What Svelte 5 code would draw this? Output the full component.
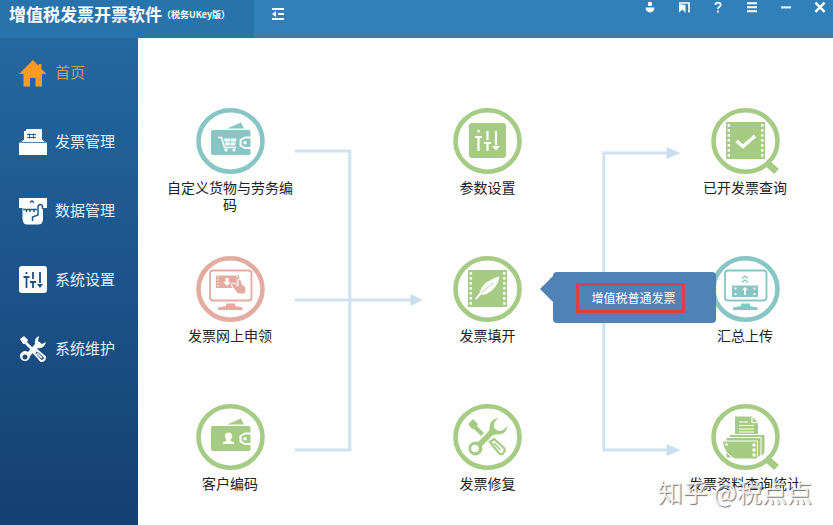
<script>
    const menu = [
        { icon: 'home', label: '首页' },
        { icon: 'tray', label: '发票管理' },
        { icon: 'card', label: '数据管理' },
        { icon: 'sliders', label: '系统设置' },
        { icon: 'tools', label: '系统维护' }
    ];

    const nodes = [
        { icon: 'goods', label: '自定义货物与劳务编码', tone: 'teal', col: 1 },
        { icon: 'sliders', label: '参数设置', tone: 'green', col: 3 },
        { icon: 'check', label: '已开发票查询', tone: 'green', col: 5, lens: true },
        { icon: 'apply', label: '发票网上申领', tone: 'pink', col: 1 },
        { icon: 'feather', label: '发票填开', tone: 'green', col: 3, tip: '增值税普通发票' },
        { icon: 'upload', label: '汇总上传', tone: 'teal', col: 5 },
        { icon: 'customer', label: '客户编码', tone: 'green', col: 1 },
        { icon: 'tools', label: '发票修复', tone: 'green', col: 3 },
        { icon: 'report', label: '发票资料查询统计', tone: 'green', col: 5, lens: true }
    ];

    const actions = [
        { icon: 'user', label: '用户' },
        { icon: 'skin', label: '窗口' },
        { icon: 'help', label: '帮助' },
        { icon: 'menu', label: '菜单' },
        { icon: 'min', label: '最小化' },
        { icon: 'close', label: '关闭' }
    ];

    let current = $state('首页');
</script>

<div class="app">
    <header>
        <div class="brand">
            <h1>增值税发票开票软件</h1>
            <span>（税务UKey版）</span>
        </div>
        <button class="toggle" aria-label="收起菜单">
            <svg viewBox="0 0 14 14" width="14" height="14">
                <path d="M1 2H13M7 7H13M1 12H13" stroke="currentColor" stroke-width="2" />
                <path d="M1 7L5 4V10Z" fill="currentColor" />
            </svg>
        </button>
        <div class="actions">
            {#each actions as action}
                <button aria-label={action.label}>
                    <svg viewBox="0 0 14 14" width="14" height="14" fill="none" stroke="currentColor" stroke-width="2">
                        {#if action.icon === 'user'}
                            <circle cx="7" cy="4" r="2.2" fill="currentColor" stroke="none" />
                            <path d="M2.500 7.500H11.500Q11 12 7 12.500Q3 12 2.500 7.500Z" fill="currentColor" stroke="none" />
                        {:else if action.icon === 'skin'}
                            <path d="M2 3H12V12.500" stroke-width="1.600" />
                            <path d="M2 4L8.500 5V13L5.500 9.500L2 12.500Z" fill="currentColor" stroke="none" />
                        {:else if action.icon === 'help'}
                            <path d="M4.400 5Q4.400 2.600 7 2.600Q9.700 2.600 9.700 4.800Q9.700 6 8.200 6.900Q7 7.600 7 9M7 10.600V12.600" stroke-width="1.800" />
                        {:else if action.icon === 'menu'}
                            <path d="M2 3.200H12M2 7.200H12M2 11.200H12" />
                        {:else if action.icon === 'min'}
                            <path d="M2 7.400H12" />
                        {:else}
                            <path d="M2.400 2.600L11.600 11.800M11.600 2.600L2.400 11.800" stroke-width="2.400" />
                        {/if}
                    </svg>
                </button>
            {/each}
        </div>
    </header>

    <div class="body">
        <nav>
            {#each menu as item}
                <a href="#{item.icon}" class:active={current === item.label} onclick={() => (current = item.label)}>
                    <svg viewBox="0 0 28 28" width="28" height="28" fill="currentColor">
                        {#if item.icon === 'home'}
                            <path d="M14 1L0 15H4.500V27.500H11V19H16.500V27.500H23V15H27.500L22.500 10V5H19.500V7Z" fill="#fb9a24" />
                        {:else if item.icon === 'tray'}
                            <path d="M5 3H7V1H23V11L28 15V27H0V15L5 11Z" />
                            <path d="M5 11L1.500 14.500H26.500L23 11" fill="none" stroke="#235f96" stroke-width="0.800" />
                            <path d="M8 6.500H17M8 9.500H17M10.500 5.500V10.500M14.500 5.500V10.500" fill="none" stroke="#235f96" stroke-width="1" />
                        {:else if item.icon === 'card'}
                            <path d="M0 1H28V11H24V22Q24 27.500 19 27.500H8Q4 27.500 3.500 22V11H0Z" />
                            <path d="M11 5.500L13 4L15 5.500M4 12.500H18M7.500 12V15M11 12V15M15 12V15M13.500 24V20L19 18V10Q19 7.500 21.500 7.500Q23.500 7.500 23.500 10.500V12" fill="none" stroke="#1e588d" stroke-width="1.500" />
                        {:else if item.icon === 'sliders'}
                            <rect width="28" height="27" rx="3" />
                            <path d="M7.500 6V8M4.500 11H10.500M7.500 11V22M14 6V13M11 16H17M14 16V22M21 6V17" fill="none" stroke="#1b4f84" stroke-width="1.800" />
                            <path d="M18 18H24L21 22Z" fill="#1b4f84" />
                        {:else}
                            <path d="M1 4L5 1L9 5L8 7L15 14L13 16L6 9L4 9Z" />
                            <path d="M20 1Q15 3 16 9L9 17A5 5 0 1 0 11 21L19 13Q25 14 27 7L23 9L19 6Z" />
                            <circle cx="6" cy="22" r="2.500" fill="#174a7e" />
                            <path d="M15 18L18 15L26 22Q26 26 22 26Z" fill="none" stroke="currentColor" stroke-width="2" />
                            <path d="M18 18L23 23" stroke="currentColor" stroke-width="1.500" />
                        {/if}
                    </svg>
                    <span>{item.label}</span>
                </a>
            {/each}
        </nav>

        <main>
            <svg class="link first" viewBox="0 0 128 346" preserveAspectRatio="none">
                <path d="M0 43H55V342H0M0 192H118" />
                <polygon points="116,186 128,192 116,198" />
            </svg>
            <svg class="link second" viewBox="0 0 128 346" preserveAspectRatio="none">
                <path d="M116 45H51V342H116" />
                <polygon points="114,39 128,45 114,51" />
                <polygon points="114,336 128,342 114,348" />
            </svg>

            {#each nodes as node}
                <div class="node {node.tone}" style:grid-column={node.col}>
                    <button>
                        <svg viewBox="0 0 69 66" width="69" height="66" fill="currentColor">
                            <ellipse class="ring" cx="34.5" cy="33" rx="32" ry="30.8" />
                            {#if node.lens}
                                <path class="handle" d="M55 54L65.500 63.500" />
                            {/if}

                            {#if node.icon === 'goods' || node.icon === 'customer'}
                                <path d="M31 20.500L45 14.500L48 20.500Z" />
                                <path d="M17 22H53Q54.500 22 54.500 24V45Q54.500 47 53 47H17Q15 47 15 45V24Q15 22 17 22Z" />
                                <path class="cut" d="M55 29.500H49L44.500 32V37.500L49 40H55" stroke-width="2" />
                                <circle cx="49" cy="34.800" r="1.800" fill="#fff" />
                                {#if node.icon === 'goods'}
                                    <path class="cut" d="M22 29.500H25.500L28.500 39.500H40" stroke-width="1.600" />
                                    <path d="M28 30.500H40.500L39 37.500H29.500Z" fill="#fff" />
                                    <path d="M34.300 30V38M28 34H40" stroke="currentColor" stroke-width="0.800" />
                                    <circle cx="30" cy="42" r="1.600" fill="#fff" />
                                    <circle cx="38" cy="42" r="1.600" fill="#fff" />
                                {:else}
                                    <path d="M32.500 28.500Q36 28.500 36 32Q36 34.500 34.500 36Q34.500 37.500 38 38V40H27V38Q30.500 37.500 30.500 36Q29 34.500 29 32Q29 28.500 32.500 28.500Z" fill="#fff" />
                                {/if}
                            {:else if node.icon === 'sliders'}
                                <rect x="16" y="15" width="37" height="35" rx="3" />
                                <path class="cut" d="M25.500 22V24.500M22 29H29M25.500 29V43M34.500 23V32M31 35H38M34.500 35V43M43 23V37" stroke-width="2.200" />
                                <path d="M39 38H47L43 42.500Z" fill="#fff" />
                            {:else if node.icon === 'check' || node.icon === 'feather'}
                                <rect x="15" y="14" width="39" height="37" />
                                {#each [16, 21, 26, 31, 36, 41, 46] as y}
                                    <rect x="16.500" y={y} width="2.600" height="2.800" rx="1" fill="#fff" />
                                    <rect x="50" y={y} width="2.600" height="2.800" rx="1" fill="#fff" />
                                {/each}
                                {#if node.icon === 'check'}
                                    <path class="cut" d="M25.500 33L32 38.500L44 28" stroke-width="3.400" />
                                {:else}
                                    <path d="M22 43L27 36Q29 28 36 25Q42 21 46.500 20.500Q45 30 38 35Q33 39.500 28 38.500L23.500 43.500Z" fill="#fff" />
                                    <path d="M28 37L40 27" stroke="currentColor" stroke-width="0.800" />
                                {/if}
                            {:else if node.icon === 'apply' || node.icon === 'upload'}
                                <rect x="14" y="14.500" width="41.500" height="30" rx="3" fill="none" stroke="currentColor" stroke-width="1.800" />
                                <path d="M30 47.500H39V50L46.500 51.500V54H22V51.500L30 50Z" />
                                {#if node.icon === 'apply'}
                                    <rect x="20" y="19.500" width="23" height="12.500" />
                                    <path d="M22 20V32M41 20V32" stroke="#fff" stroke-width="1" stroke-dasharray="1.500 1.500" />
                                    <path d="M29.500 22H32.500V26H34.500L31 30L27.500 26H29.500Z" fill="#fff" />
                                    <path d="M35 28L38 27L42 30V24Q43.500 22 45 24L46 28L49 30Q51 33 49 38H42L36.500 31Z" stroke="#fff" stroke-width="1" />
                                {:else}
                                    <rect x="21" y="29.500" width="26" height="11.500" />
                                    <path d="M34 31L37 34H35V39H33V34H31Z" fill="#fff" />
                                    <path d="M24.500 31.500V39M43.500 31.500V39" stroke="#fff" stroke-width="1.800" stroke-dasharray="2 3.500" />
                                    <path d="M31 22.500L34 20L37 22.500M31 26.500L34 24L37 26.500" fill="none" stroke="currentColor" stroke-width="1.300" />
                                {/if}
                            {:else if node.icon === 'tools'}
                                <path d="M15 20L20 15L25 20L24 22L31 29L28 32L21 25L19 25Z" />
                                <path d="M45.500 14Q37 15 36.500 23Q37 26 35 28L25 38A7 7 0 1 0 29 42L39 32Q42 29.500 46 30.500Q53.500 30 54.500 21.500Q51 26.500 47 27Q40 26 41 20Q42 16.500 45.500 14Z" />
                                <circle cx="22" cy="44.500" r="3.800" fill="#fff" />
                                <path d="M37 38L41 35L51 44Q53 47 49.500 50Q47 51 45 48Z" fill="none" stroke="currentColor" stroke-width="2.200" />
                                <path d="M41 39L47.500 46" stroke="currentColor" stroke-width="1.500" />
                            {:else}
                                <path d="M24 12.500H41L47 18.500V30H24Z" />
                                <path class="cut" d="M41 13V18.500H47M28 18H37M28 21.500H43M28 25H43M28 28H43" stroke-width="1.200" />
                                <path d="M19 31H53.500V48Q53 52 47 52H19Z" />
                                <path d="M15 33.500H50V51Q49 54 44 54H15Z" stroke="#fff" stroke-width="1" />
                                <path d="M11.500 37H46.500V55H24Q12 49 11.500 37Z" stroke="#fff" stroke-width="1" />
                                {#each [41, 46, 51] as y}
                                    <circle cx="43" cy={y} r="1.700" fill="#fff" />
                                {/each}
                                <circle cx="15.500" cy="40.500" r="1.300" fill="#fff" />
                            {/if}
                        </svg>
                        <span>{node.label}</span>
                    </button>
                    {#if node.tip}
                        <div class="tip">
                            <button>{node.tip}</button>
                        </div>
                    {/if}
                </div>
            {/each}
            <div class="watermark">知乎 @税点点</div>
        </main>
    </div>
</div>

<style>
    :global(body) {
        background: #fefefe;
    }
    .app {
        display: flex;
        flex-direction: column;
        min-height: 100vh;
        font-family: "Noto Sans CJK SC", "Liberation Sans", sans-serif;
    }
    button {
        padding: 0;
        border: 0;
        background: none;
        color: inherit;
        font: inherit;
        cursor: pointer;
    }
    svg {
        display: block;
        flex: none;
    }

    header {
        display: flex;
        height: 38px;
        background: #3280b9;
        color: #fff;
    }
    .brand {
        display: flex;
        box-sizing: border-box;
        width: 254px;
        padding-left: 9px;
        background: #2873ac;
        font-weight: 700;
        line-height: 28px;
        white-space: nowrap;
    }
    h1 {
        margin: 0;
        font-size: 17px;
    }
    .brand span {
        padding-top: 1px;
        font-size: 9px;
    }
    .toggle {
        align-self: flex-start;
        margin: 7px 0 0 17px;
    }
    .actions {
        display: flex;
        align-items: flex-start;
        gap: 10px;
        margin-left: auto;
        padding-right: 1px;
    }
    .actions button {
        display: flex;
        justify-content: center;
        width: 24px;
    }

    .body {
        display: flex;
        flex: 1;
    }
    nav {
        flex: none;
        width: 138px;
        background: linear-gradient(#24689f, #143f72);
    }
    nav a {
        display: flex;
        align-items: center;
        gap: 8px;
        height: 69px;
        padding-left: 19px;
        color: #fff;
        font-size: 15px;
        line-height: 22px;
        text-decoration: none;
    }
    nav span {
        padding-bottom: 2px;
        color: #e3eef7;
    }
    nav a.active span {
        color: #d99a48;
    }

    main {
        position: relative;
        flex: 1;
        display: grid;
        grid-template-columns: 130px 1fr 130px 1fr 130px;
        grid-template-rows: 148px 148px auto;
        padding: 70px 23px 0 27px;
    }
    .link {
        grid-row: 1 / 4;
        width: 100%;
        height: 346px;
        overflow: visible;
        fill: #c9dff0;
    }
    .link path {
        fill: none;
        stroke: #cfe2f1;
        stroke-width: 3;
    }
    .first {
        grid-column: 2;
    }
    .second {
        grid-column: 4;
    }
    .node {
        position: relative;
    }
    .node > button {
        display: flex;
        flex-direction: column;
        align-items: center;
        gap: 5px;
        width: 100%;
        overflow: visible;
    }
    .node svg {
        overflow: visible;
    }
    .node span {
        color: #222;
        font-size: 14px;
        line-height: 17px;
    }
    .teal {
        color: #87c6c5;
    }
    .green {
        color: #a6cb84;
    }
    .pink {
        color: #e4aca1;
    }
    .ring {
        fill: none;
        stroke: currentColor;
        stroke-width: 4.6;
    }
    .handle {
        stroke: currentColor;
        stroke-width: 7;
    }
    .cut {
        fill: none;
        stroke: #fff;
    }

    .tip {
        position: absolute;
        top: 16px;
        left: 100%;
        z-index: 1;
        display: flex;
        align-items: center;
        box-sizing: border-box;
        width: 163px;
        height: 51px;
        padding-left: 23px;
        border-radius: 4px;
        background: #5082b8;
        color: #fff;
    }
    .tip::before {
        content: "";
        position: absolute;
        top: 4px;
        right: 100%;
        border: solid transparent;
        border-width: 13px 13px 13px 0;
        border-right-color: #5082b8;
    }
    .tip button {
        padding: 3px 6px 3px 13px;
        border: 3px solid #d8404f;
        font-size: 12px;
        line-height: 18px;
        white-space: nowrap;
    }
    .watermark {
        position: absolute;
        right: 21px;
        bottom: 16px;
        color: rgba(255, 255, 255, 0.85);
        font-size: 25px;
        line-height: 36px;
        text-shadow: 1px 1px 1px #777;
        pointer-events: none;
    }
</style>
